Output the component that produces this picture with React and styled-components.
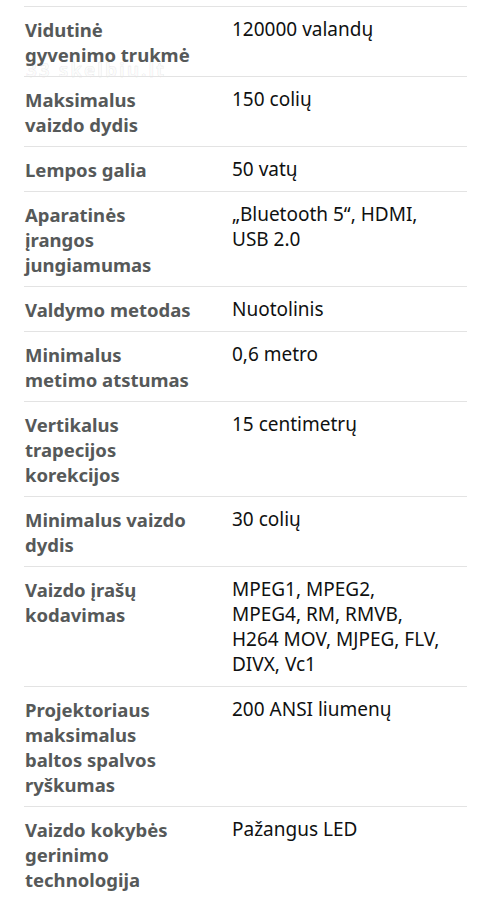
import React from 'react';
import styled, { createGlobalStyle } from 'styled-components';

const GlobalStyle = createGlobalStyle`
  html, body {
    margin: 0;
    padding: 0;
    background: #fff;
  }
  body {
    font-family: "Noto Sans", "Open Sans", Arial, sans-serif;
    -webkit-font-smoothing: antialiased;
  }
`

const Page = styled.div`
  width: 485px;
  height: 900px;
  overflow: hidden;
  background: #fff;
  padding: 6px 18px 0 24px;
  box-sizing: border-box;
`

const Table = styled.div`
  display: flex;
  flex-direction: column;
`

const Row = styled.div`
  position: relative;
  display: grid;
  grid-template-columns: 208px 1fr;
  padding: 10px 0 ${p => (p.last ? 0 : 9)}px;
  border-top: 1px solid #e3e3e3;
`

const Label = styled.div`
  position: relative;
  z-index: 1;
  padding-left: 1px;
  font-size: 18.5px;
  line-height: 25px;
  font-weight: 700;
  color: #565959;
  white-space: pre-line;
`

const Value = styled.div`
  font-size: 19px;
  line-height: 25px;
  color: #0f1111;
  white-space: pre-line;
`

const Watermark = styled.span`
  position: absolute;
  left: 2px;
  top: 53px;
  font-size: 19px;
  line-height: 20px;
  font-weight: 700;
  letter-spacing: 2px;
  color: #fbfbfb;
  -webkit-text-stroke: 1px rgba(0, 0, 0, 0.06);
  pointer-events: none;
`

const specs = [
  { label: 'Vidutinė\ngyvenimo trukmė', value: '120000 valandų', mark: true },
  { label: 'Maksimalus\nvaizdo dydis', value: '150 colių' },
  { label: 'Lempos galia', value: '50 vatų' },
  { label: 'Aparatinės\nįrangos\njungiamumas', value: '„Bluetooth 5“, HDMI,\nUSB 2.0' },
  { label: 'Valdymo metodas', value: 'Nuotolinis' },
  { label: 'Minimalus\nmetimo atstumas', value: '0,6 metro' },
  { label: 'Vertikalus\ntrapecijos\nkorekcijos', value: '15 centimetrų' },
  { label: 'Minimalus vaizdo\ndydis', value: '30 colių' },
  { label: 'Vaizdo įrašų\nkodavimas', value: 'MPEG1, MPEG2,\nMPEG4, RM, RMVB,\nH264 MOV, MJPEG, FLV,\nDIVX, Vc1' },
  { label: 'Projektoriaus\nmaksimalus\nbaltos spalvos\nryškumas', value: '200 ANSI liumenų' },
  { label: 'Vaizdo kokybės\ngerinimo\ntechnologija', value: 'Pažangus LED' },
]

const App = () => {
  return (
    <Page>
      <GlobalStyle />
      <Table>
        {specs.map((s, i) => (
          <Row key={i} last={i === specs.length - 1}>
            <Label>{s.label}</Label>
            <Value>{s.value}</Value>
            {s.mark && <Watermark>33 skelbiu.lt</Watermark>}
          </Row>
        ))}
      </Table>
    </Page>
  );
};

export default App;
